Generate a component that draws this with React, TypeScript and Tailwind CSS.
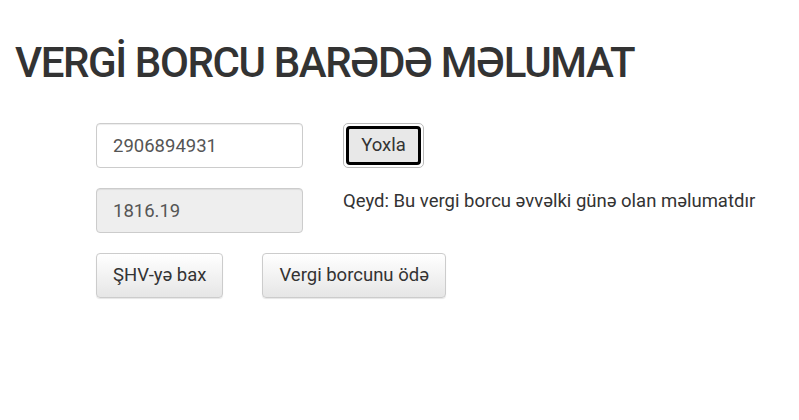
export default function App() {
  return (
    <div className="min-h-[420px] w-[799px] bg-white font-['Roboto',sans-serif] text-[#333]">
      <h1 className="pl-[15px] pt-[38px] text-[42px] font-medium leading-[50px] tracking-[-1.4px] text-[#333]">
        VERGİ BORCU BARƏDƏ MƏLUMAT
      </h1>
      <div className="ml-[96px] mt-[35px] grid grid-cols-[207px_auto] gap-x-[40px] gap-y-[20px]">
        <input
          type="text"
          defaultValue="2906894931"
          className="h-[45px] w-[207px] rounded-[4px] border border-[#ccc] bg-white px-[16px] text-[18.5px] text-[#555] shadow-[inset_0_1px_1px_rgba(0,0,0,0.075)] outline-none"
        />
        <div className="flex items-center">
          <button
            type="button"
            className="h-[45px] w-[81px] rounded-[5px] border border-[#bbb] bg-white p-[2px]"
          >
            <span className="flex h-full w-full items-center justify-center rounded-[4px] border-[3px] border-black bg-[#e8e8e8] text-[18.5px] text-[#333]">
              Yoxla
            </span>
          </button>
        </div>
        <input
          type="text"
          readOnly
          defaultValue="1816.19"
          className="h-[45px] w-[207px] rounded-[4px] border border-[#ccc] bg-[#eee] px-[16px] text-[18.5px] text-[#555] shadow-[inset_0_1px_1px_rgba(0,0,0,0.075)] outline-none"
        />
        <div className="pt-[1px] text-[18.5px] leading-[24px] text-[#333]">
          Qeyd: Bu vergi borcu əvvəlki günə olan məlumatdır
        </div>
        <div className="col-span-2 flex gap-[39px]">
          <button
            type="button"
            className="h-[45px] rounded-[4px] border border-[#ccc] bg-gradient-to-b from-white to-[#e6e6e6] px-[16px] text-[18.5px] text-[#333] shadow-[0_1px_1px_rgba(0,0,0,0.1)]"
          >
            ŞHV-yə bax
          </button>
          <button
            type="button"
            className="h-[45px] rounded-[4px] border border-[#ccc] bg-gradient-to-b from-white to-[#e6e6e6] px-[16px] text-[18.5px] text-[#333] shadow-[0_1px_1px_rgba(0,0,0,0.1)]"
          >
            Vergi borcunu ödə
          </button>
        </div>
      </div>
    </div>
  );
}
